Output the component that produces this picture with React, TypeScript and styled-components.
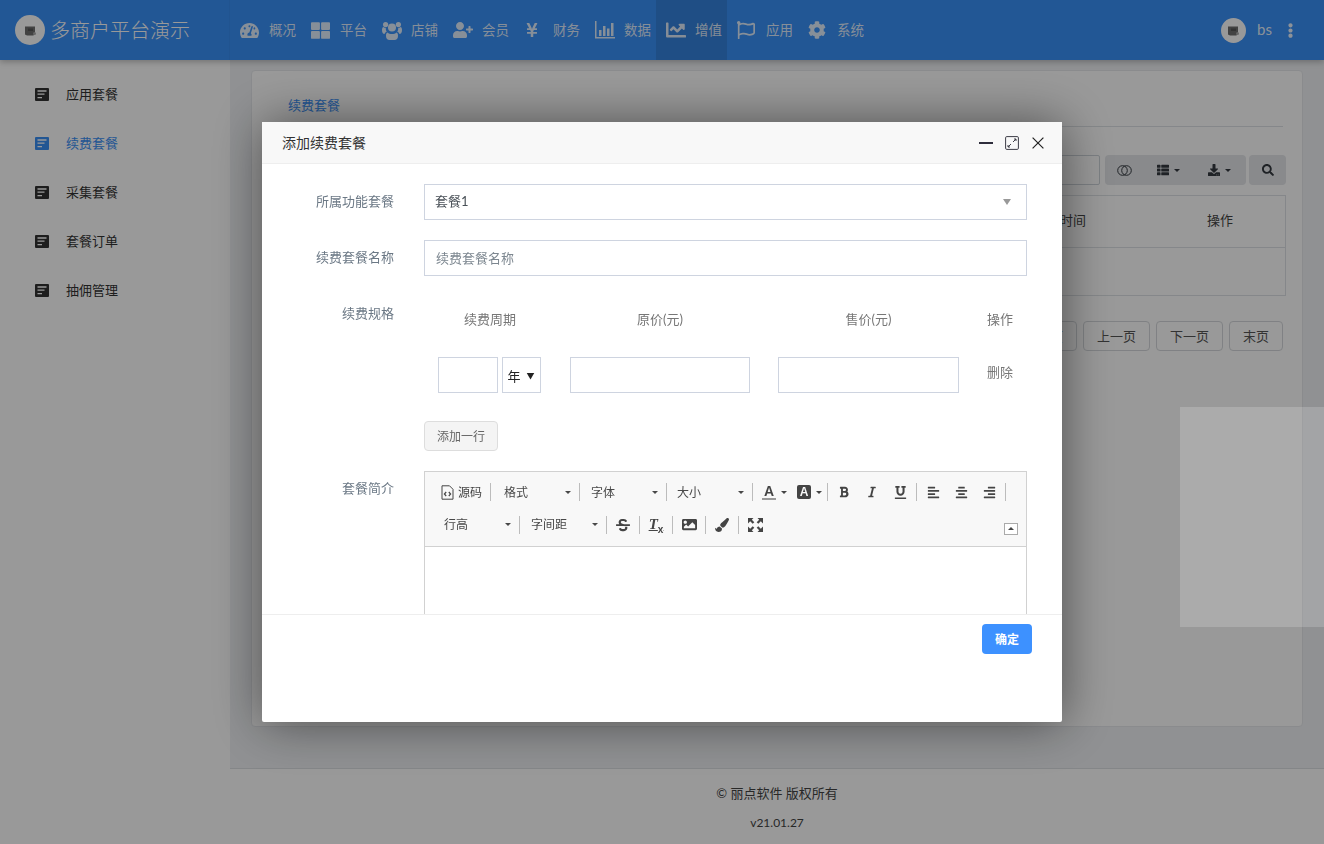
import { ReactNode } from 'react';
import styled, { createGlobalStyle } from 'styled-components';
import {
  FaAlignCenter,
  FaAlignLeft,
  FaAlignRight,
  FaBold,
  FaChartLine,
  FaCog,
  FaDownload,
  FaEllipsisV,
  FaImage,
  FaItalic,
  FaPaintBrush,
  FaRegFlag,
  FaSearch,
  FaStrikethrough,
  FaTachometerAlt,
  FaThLarge,
  FaThList,
  FaUnderline,
  FaUserPlus,
  FaYenSign,
} from 'react-icons/fa';

const FONT = `Lato, "Noto Sans CJK SC", sans-serif`;

const UsersIcon = () => (
  <svg width="20" height="19" viewBox="0 0 20 19" fill="currentColor">
    <circle cx="10" cy="6.5" r="4" />
    <circle cx="3.6" cy="3.6" r="2.6" />
    <circle cx="16.4" cy="3.6" r="2.6" />
    <path d="M5.5 11.5c1 1 2.8 1.6 4.5 1.6s3.500-.6 4.500-1.600c1.200.3 1.500 2 1.500 3.500 0 2.500-1.500 4-3.500 4H7.500c-2 0-3.500-1.500-3.500-4 0-1.500.3-3.200 1.500-3.500z" />
    <path d="M0 9c0-1.500.5-3 1.500-3 .7.600 1.500.9 2.300.9-.2 1.500.3 2.800 1 3.600-1 .4-1.800 1.200-2.200 2.500C1 13 0 11.500 0 9zM20 9c0-1.500-.5-3-1.500-3-.7.600-1.500.9-2.300.9.200 1.500-.3 2.800-1 3.600 1 .4 1.800 1.200 2.200 2.500 1.600 0 2.600-1.500 2.600-4z" />
  </svg>
);

const BarChartIcon = () => (
  <svg width="20" height="18" viewBox="0 0 20 18" fill="currentColor">
    <path d="M0 0h1.500v16H20v1.500H0z" />
    <path d="M4 9h2.500v6H4zM8 5h2.500v10H8zM12 7.500h2.500V15H12zM16 2h2.500v13H16z" />
  </svg>
);

const DocIcon = () => (
  <svg width="14" height="13" viewBox="0 0 14 13">
    <rect width="14" height="13" rx="1" fill="currentColor" />
    <path d="M2.500 3h9M2.500 6.200h7M2.500 9.600h4.500" stroke="#fff" strokeWidth="1.300" />
  </svg>
);

const SourceIcon = () => (
  <svg width="13" height="15" viewBox="0 0 13 15" fill="none" stroke="#444">
    <path d="M1 .8h7.500L12 4.300v9.900H1z" />
    <path d="M5.200 7 3.400 9l1.800 2M7.800 7l1.800 2-1.800 2" strokeWidth="1.200" />
  </svg>
);

const ExpandIcon = () => (
  <svg width="15" height="14" viewBox="0 0 15 14" fill="#444">
    <path d="M0 0h5.500L3.800 1.700l2.500 2.500-1.600 1.500-2.500-2.400L0 5.400zM15 0H9.500l1.700 1.700-2.500 2.500 1.600 1.500 2.500-2.400L15 5.400zM0 14h5.500l-1.700-1.700 2.500-2.500-1.600-1.500-2.500 2.400L0 8.600zM15 14H9.500l1.700-1.700-2.500-2.500 1.600-1.500 2.500 2.400L15 8.600z" />
  </svg>
);

const MaximizeIcon = () => (
  <svg width="14" height="14" viewBox="0 0 14 14" fill="none" stroke="#3c3c46">
    <rect x=".6" y=".6" width="12.800" height="12.800" rx="1.200" />
    <path d="m8 6 3-3M9 3h2v2M6 8l-3 3M3 9v2h2" />
  </svg>
);

const CloseIcon = () => (
  <svg width="12" height="12" viewBox="0 0 12 12" stroke="#222" strokeWidth="1.200">
    <path d="m.6.6 10.800 10.800M11.400.6.600 11.400" />
  </svg>
);

const OverlapIcon = () => (
  <svg width="15" height="11" viewBox="0 0 15 11" fill="none" stroke="currentColor">
    <circle cx="5.500" cy="5.500" r="4.800" />
    <circle cx="9.500" cy="5.500" r="4.800" />
  </svg>
);

const AvatarMark = () => (
  <svg width="13" height="13" viewBox="0 0 13 13">
    <path d="M1 2.500h10v6l-1.500 3H3l-2-1z" fill="#6f6f6f" />
    <path d="M4 4.500h5v2.500H4z" fill="#555" />
    <circle cx="10.500" cy="9.500" r="1.500" fill="#aaa" />
  </svg>
);

const NAV: { label: string; icon: ReactNode; active?: boolean }[] = [
  { label: '概况', icon: <FaTachometerAlt size={19} /> },
  { label: '平台', icon: <FaThLarge size={19} /> },
  { label: '店铺', icon: <UsersIcon /> },
  { label: '会员', icon: <FaUserPlus size={20} /> },
  { label: '财务', icon: <FaYenSign size={16} /> },
  { label: '数据', icon: <BarChartIcon /> },
  { label: '增值', icon: <FaChartLine size={20} />, active: true },
  { label: '应用', icon: <FaRegFlag size={18} /> },
  { label: '系统', icon: <FaCog size={18} /> },
];

const SIDE = [
  { label: '应用套餐' },
  { label: '续费套餐', active: true },
  { label: '采集套餐' },
  { label: '套餐订单' },
  { label: '抽佣管理' },
];

export default function App() {
  return (
    <>
      <GlobalStyle />
      <Page>
        <Header>
          <Brand>
            <Avatar $size={30}>
              <AvatarMark />
            </Avatar>
            <BrandName>多商户平台演示</BrandName>
          </Brand>
          <Nav>
            {NAV.map((item) => (
              <NavItem key={item.label} $active={item.active}>
                <NavIcon>{item.icon}</NavIcon>
                <NavText>{item.label}</NavText>
              </NavItem>
            ))}
          </Nav>
          <UserBox>
            <Avatar $size={25}>
              <AvatarMark />
            </Avatar>
            <UserName>bs</UserName>
            <FaEllipsisV size={15} />
          </UserBox>
        </Header>
        <Body>
          <Sidebar>
            {SIDE.map((item) => (
              <SideItem key={item.label} $active={item.active}>
                <DocIcon />
                <SideText>{item.label}</SideText>
              </SideItem>
            ))}
          </Sidebar>
          <Main>
            <Card>
              <TabBar>
                <Tab>续费套餐</Tab>
              </TabBar>
              <TableTools>
                <SearchBox placeholder="" />
                <ToolGroup>
                  <ToolButton $width={38}>
                    <OverlapIcon />
                  </ToolButton>
                  <ToolButton $width={50}>
                    <FaThList size={12} />
                    <Caret />
                  </ToolButton>
                  <ToolButton $width={53}>
                    <FaDownload size={12} />
                    <Caret />
                  </ToolButton>
                </ToolGroup>
                <ToolButton $width={37} $single>
                  <FaSearch size={12} />
                </ToolButton>
              </TableTools>
              <DataTable>
                <TableHead>
                  <span />
                  <HeadCell>创建时间</HeadCell>
                  <HeadCell>操作</HeadCell>
                </TableHead>
                <TableEmpty />
              </DataTable>
              <Pager>
                <PageButton>首页</PageButton>
                <PageButton>上一页</PageButton>
                <PageButton>下一页</PageButton>
                <PageButton>末页</PageButton>
              </Pager>
            </Card>
            <Footer>
              <FooterLine>© 丽点软件 版权所有</FooterLine>
              <FooterLine $small>v21.01.27</FooterLine>
            </Footer>
          </Main>
        </Body>
      </Page>

      <Shade>
        <GhostPanel />
        <Modal>
          <ModalHead>
            <ModalTitle>添加续费套餐</ModalTitle>
            <ModalActions>
              <MinimizeBar />
              <MaximizeIcon />
              <CloseIcon />
            </ModalActions>
          </ModalHead>
          <ModalBody>
            <FormRow>
              <FormLabel>所属功能套餐</FormLabel>
              <SelectBox>
                <SelectText>套餐1</SelectText>
                <SelectArrow />
              </SelectBox>
            </FormRow>
            <FormRow>
              <FormLabel>续费套餐名称</FormLabel>
              <TextInput placeholder="续费套餐名称" />
            </FormRow>
            <FormRow>
              <FormLabel>续费规格</FormLabel>
              <SpecBlock>
                <SpecGrid>
                  <SpecHead>续费周期</SpecHead>
                  <SpecHead>原价(元)</SpecHead>
                  <SpecHead>售价(元)</SpecHead>
                  <SpecHead>操作</SpecHead>
                  <PeriodCell>
                    <SmallInput $width={60} />
                    <UnitSelect>
                      年<UnitArrow>▼</UnitArrow>
                    </UnitSelect>
                  </PeriodCell>
                  <SpecCell>
                    <SmallInput $width={180} />
                  </SpecCell>
                  <SpecCell>
                    <SmallInput $width={181} />
                  </SpecCell>
                  <DeleteCell>删除</DeleteCell>
                </SpecGrid>
                <AddRowButton>添加一行</AddRowButton>
              </SpecBlock>
            </FormRow>
            <FormRow>
              <FormLabel>套餐简介</FormLabel>
              <Editor>
                <EditorToolbar>
                  <ToolRow $height={32}>
                    <SourceButton>
                      <SourceIcon />
                      <ComboText>源码</ComboText>
                    </SourceButton>
                    <Sep />
                    <Combo $width={88} $inset={13}>
                      <ComboText>格式</ComboText>
                      <Caret />
                    </Combo>
                    <Sep />
                    <Combo $width={86} $inset={11}>
                      <ComboText>字体</ComboText>
                      <Caret />
                    </Combo>
                    <Sep />
                    <Combo $width={85} $inset={10}>
                      <ComboText>大小</ComboText>
                      <Caret />
                    </Combo>
                    <Sep />
                    <ColorButton>
                      <ColorA>A</ColorA>
                      <Caret />
                    </ColorButton>
                    <ColorButton>
                      <ColorABack>A</ColorABack>
                      <Caret />
                    </ColorButton>
                    <Sep />
                    <EdGroup>
                      <EdButton>
                        <FaBold size={12} />
                      </EdButton>
                      <EdButton>
                        <FaItalic size={12} />
                      </EdButton>
                      <EdButton>
                        <FaUnderline size={13} />
                      </EdButton>
                    </EdGroup>
                    <Sep />
                    <EdGroup>
                      <EdButton>
                        <FaAlignLeft size={13} />
                      </EdButton>
                      <EdButton>
                        <FaAlignCenter size={13} />
                      </EdButton>
                      <EdButton>
                        <FaAlignRight size={13} />
                      </EdButton>
                    </EdGroup>
                    <Sep />
                  </ToolRow>
                  <ToolRow $height={33}>
                    <Combo $width={94} $inset={19}>
                      <ComboText>行高</ComboText>
                      <Caret />
                    </Combo>
                    <Sep />
                    <Combo $width={86} $inset={11}>
                      <ComboText>字间距</ComboText>
                      <Caret />
                    </Combo>
                    <Sep />
                    <EdGroup>
                      <EdButton>
                        <FaStrikethrough size={14} />
                      </EdButton>
                    </EdGroup>
                    <Sep />
                    <EdGroup>
                      <EdButton>
                        <ClearMark>
                          T<sub>x</sub>
                        </ClearMark>
                      </EdButton>
                    </EdGroup>
                    <Sep />
                    <EdGroup>
                      <EdButton>
                        <FaImage size={15} />
                      </EdButton>
                    </EdGroup>
                    <Sep />
                    <EdGroup>
                      <EdButton>
                        <FaPaintBrush size={14} />
                      </EdButton>
                    </EdGroup>
                    <Sep />
                    <EdGroup>
                      <EdButton>
                        <ExpandIcon />
                      </EdButton>
                    </EdGroup>
                    <CollapseBox />
                  </ToolRow>
                </EditorToolbar>
                <EditorArea />
              </Editor>
            </FormRow>
          </ModalBody>
          <ModalFoot>
            <ConfirmButton>确定</ConfirmButton>
          </ModalFoot>
        </Modal>
      </Shade>
    </>
  );
}

const GlobalStyle = createGlobalStyle`
  * {
    box-sizing: border-box;
  }

  html,
  body {
    margin: 0;
    height: 100%;
    overflow: hidden;
    font-family: ${FONT};
    font-size: 13px;
    color: #333;
    background: #fff;
  }

  input {
    font-family: ${FONT};
    font-size: 13px;
  }
`;

const Page = styled.div`
  height: 844px;
  display: flex;
  flex-direction: column;
`;

const Header = styled.header`
  height: 60px;
  flex: none;
  display: flex;
  align-items: stretch;
  background: #3a91f8;
  color: #fff;
  box-shadow: 0 2px 6px rgba(0, 0, 0, 0.25);
  position: relative;
`;

const Brand = styled.div`
  width: 230px;
  flex: none;
  display: flex;
  align-items: center;
  gap: 5px;
  padding-left: 15px;
  border-right: 1px solid rgba(0, 0, 0, 0.03);
`;

const Avatar = styled.div<{ $size: number }>`
  width: ${(p) => p.$size}px;
  height: ${(p) => p.$size}px;
  border-radius: 50%;
  background: #fff;
  display: flex;
  align-items: center;
  justify-content: center;
`;

const BrandName = styled.div`
  padding-bottom: 2px;
  font-size: 20px;
  font-weight: 300;
  color: #fff;
`;

const Nav = styled.nav`
  display: flex;
  align-items: stretch;
`;

const NavItem = styled.div<{ $active?: boolean }>`
  width: 71px;
  display: flex;
  align-items: center;
  padding-left: 10px;
  font-size: 13.500px;
  white-space: nowrap;
  color: rgba(255, 255, 255, 0.85);
  background: ${(p) => (p.$active ? 'rgba(0, 0, 0, 0.1)' : 'transparent')};
`;

const NavIcon = styled.span`
  width: 29px;
  flex: none;
  display: flex;
  align-items: center;
`;

const NavText = styled.span`
  padding-bottom: 2px;
`;

const UserBox = styled.div`
  margin-left: auto;
  display: flex;
  align-items: center;
  padding-right: 26px;
  color: rgba(255, 255, 255, 0.9);

  & > svg {
    margin-left: 11px;
  }
`;

const UserName = styled.span`
  margin-left: 11px;
  padding-bottom: 2px;
  font-size: 15px;
`;

const Body = styled.div`
  flex: 1;
  min-height: 0;
  display: flex;
`;

const Sidebar = styled.aside`
  width: 230px;
  flex: none;
  background: #fff;
  padding-top: 10px;
`;

const SideItem = styled.div<{ $active?: boolean }>`
  height: 49px;
  display: flex;
  align-items: center;
  gap: 17px;
  padding-left: 35px;
  color: ${(p) => (p.$active ? '#3a8ff5' : '#333')};
`;

const SideText = styled.span`
  padding-bottom: 2px;
`;

const Main = styled.main`
  flex: 1;
  min-width: 0;
  display: flex;
  flex-direction: column;
  background: #f0f2f5;
`;

const Card = styled.section`
  height: 657px;
  margin: 10px 21px 41px;
  padding: 0 16px 0 19px;
  background: #fff;
  border: 1px solid #e6e8ec;
  border-radius: 4px;
`;

const TabBar = styled.div`
  height: 56px;
  margin-right: 3px;
  border-bottom: 1px solid #dee2e6;
  display: flex;
  align-items: flex-end;
  padding: 0 0 12px 17px;
`;

const Tab = styled.span`
  color: #3a8ff5;
`;

const TableTools = styled.div`
  margin-top: 28px;
  display: flex;
  justify-content: flex-end;
  gap: 3px;
`;

const SearchBox = styled.input`
  width: 300px;
  height: 30px;
  margin-right: 2px;
  border: 1px solid #ced4da;
  border-radius: 0 2px 2px 0;
`;

const ToolGroup = styled.div`
  display: flex;
  border-radius: 4px;
  overflow: hidden;
`;

const ToolButton = styled.div<{ $width: number; $single?: boolean }>`
  width: ${(p) => p.$width}px;
  height: 30px;
  display: flex;
  align-items: center;
  justify-content: center;
  gap: 5px;
  background: #e4e6e9;
  color: #343a40;
  border-radius: ${(p) => (p.$single ? '4px' : '0')};
`;

const Caret = styled.i`
  width: 0;
  height: 0;
  flex: none;
  border-left: 3px solid transparent;
  border-right: 3px solid transparent;
  border-top: 3px solid currentColor;
`;

const DataTable = styled.div`
  margin-top: 10px;
  border: 1px solid #dee2e6;
`;

const TableHead = styled.div`
  height: 52px;
  padding-bottom: 4px;
  display: grid;
  grid-template-columns: 1fr 190px 130px;
  align-items: center;
  border-bottom: 1px solid #dee2e6;
`;

const HeadCell = styled.span`
  text-align: center;
  color: #444;
`;

const TableEmpty = styled.div`
  height: 47px;
`;

const Pager = styled.div`
  margin-top: 25px;
  padding-right: 3px;
  display: flex;
  justify-content: flex-end;
  gap: 6px;
`;

const PageButton = styled.div`
  height: 30px;
  padding: 0 13px 2px;
  display: flex;
  align-items: center;
  border: 1px solid #d5d8dc;
  border-radius: 4px;
  color: #555;
`;

const Footer = styled.footer`
  flex: 1;
  padding-top: 10px;
  background: #fff;
  border-top: 1px solid #dcdfe3;
`;

const FooterLine = styled.div<{ $small?: boolean }>`
  height: 30px;
  line-height: 28px;
  text-align: center;
  font-size: ${(p) => (p.$small ? '12px' : '13px')};
  color: #444;
`;

const Shade = styled.div`
  position: fixed;
  inset: 0;
  display: flex;
  align-items: center;
  justify-content: center;
  background: rgba(0, 0, 0, 0.4);
`;

const GhostPanel = styled.div`
  position: absolute;
  left: 1180px;
  top: 407px;
  right: 0;
  height: 220px;
  background: rgba(255, 255, 255, 0.17);
`;

const Modal = styled.div`
  position: relative;
  width: 800px;
  height: 600px;
  display: flex;
  flex-direction: column;
  background: #fff;
  border-radius: 2px;
  box-shadow: 1px 1px 50px rgba(0, 0, 0, 0.5);
`;

const ModalHead = styled.div`
  height: 42px;
  flex: none;
  display: flex;
  align-items: center;
  justify-content: space-between;
  padding: 0 18px 0 20px;
  background: #f8f8f8;
  border-bottom: 1px solid #eee;
`;

const ModalTitle = styled.div`
  padding-bottom: 2px;
  font-size: 14px;
  color: #333;
`;

const ModalActions = styled.div`
  display: flex;
  align-items: center;
  gap: 12px;

  & > svg:last-child {
    margin-left: 1px;
  }
`;

const MinimizeBar = styled.i`
  width: 14px;
  height: 2px;
  background: #2e2d3c;
`;

const ModalBody = styled.div`
  height: 451px;
  flex: none;
  overflow: hidden;
  padding: 20px 35px 0 0;
  border-bottom: 1px solid #eee;
`;

const FormRow = styled.div`
  display: flex;
  margin-bottom: 20px;
`;

const FormLabel = styled.label`
  width: 132px;
  flex: none;
  margin-right: 30px;
  line-height: 35px;
  text-align: right;
  color: #6b7885;
`;

const SelectBox = styled.div`
  flex: 1;
  height: 36px;
  padding: 0 10px;
  display: flex;
  align-items: center;
  justify-content: space-between;
  border: 1px solid #ced4e0;
  color: #495057;
`;

const SelectText = styled.span`
  padding-bottom: 3px;
`;

const SelectArrow = styled.i`
  width: 0;
  height: 0;
  margin-right: 5px;
  border-left: 4px solid transparent;
  border-right: 4px solid transparent;
  border-top: 6px solid #999;
`;

const TextInput = styled.input`
  flex: 1;
  height: 36px;
  padding: 0 11px;
  border: 1px solid #ced4e0;
  outline: none;

  &::placeholder {
    color: #7d8790;
  }
`;

const SpecBlock = styled.div`
  flex: 1;
  min-width: 0;
`;

const SpecGrid = styled.div`
  display: grid;
  grid-template-columns: 132px 208px 209px 54px;
  color: #777;
`;

const SpecHead = styled.div`
  height: 46px;
  line-height: 46px;
  text-align: center;
`;

const SpecCell = styled.div`
  height: 66px;
  display: flex;
  align-items: center;
  justify-content: center;
  gap: 4px;
`;

const PeriodCell = styled(SpecCell)`
  padding-right: 2px;
`;

const SmallInput = styled.input<{ $width: number }>`
  width: ${(p) => p.$width}px;
  height: 36px;
  border: 1px solid #ced4e0;
  outline: none;
`;

const UnitSelect = styled.div`
  width: 39px;
  height: 36px;
  padding-left: 5px;
  display: flex;
  align-items: center;
  gap: 6px;
  border: 1px solid #ced4e0;
  color: #222;
`;

const UnitArrow = styled.span`
  font-size: 8px;
`;

const DeleteCell = styled.div`
  height: 66px;
  padding-top: 21px;
  text-align: center;
  line-height: 18px;
`;

const AddRowButton = styled.button`
  display: block;
  width: 74px;
  height: 30px;
  margin-top: 13px;
  padding: 0 0 2px;
  font-family: ${FONT};
  font-size: 12px;
  color: #666;
  background: #f4f4f4;
  border: 1px solid #ddd;
  border-radius: 4px;
`;

const Editor = styled.div`
  flex: 1;
  min-width: 0;
  border: 1px solid #d1d1d1;
`;

const EditorToolbar = styled.div`
  padding: 4px 0 5px;
  background: #f8f8f8;
  border-bottom: 1px solid #d1d1d1;
`;

const ToolRow = styled.div<{ $height: number }>`
  height: ${(p) => p.$height}px;
  display: flex;
  align-items: center;
  color: #444;
`;

const SourceButton = styled.div`
  width: 65px;
  flex: none;
  padding-left: 16px;
  display: flex;
  align-items: center;
  gap: 4px;
  font-size: 12px;
`;

const ComboText = styled.span`
  padding-bottom: 2px;
`;

const Sep = styled.i`
  width: 1px;
  height: 18px;
  flex: none;
  background: #bcbcbc;
`;

const Combo = styled.div<{ $width: number; $inset?: number }>`
  width: ${(p) => p.$width}px;
  flex: none;
  padding: 0 8px 0 ${(p) => p.$inset ?? 12}px;
  display: flex;
  align-items: center;
  justify-content: space-between;
  font-size: 12px;
  color: #484848;
`;

const ColorButton = styled.div`
  flex: none;
  width: 37px;
  padding-left: 9px;
  display: flex;
  align-items: center;
  gap: 5px;
`;

const ColorA = styled.span`
  font-family: 'Liberation Sans', sans-serif;
  font-size: 14px;
  font-weight: 700;
  line-height: 14px;
  border-bottom: 2px solid #999;
  padding: 0 2px;
`;

const ColorABack = styled.span`
  font-family: 'Liberation Sans', sans-serif;
  font-size: 12px;
  font-weight: 700;
  line-height: 14px;
  width: 14px;
  text-align: center;
  color: #f8f8f8;
  background: #444;
  border-radius: 2px;
  margin-left: -2px;
`;

const EdGroup = styled.div`
  display: flex;
  padding: 0 2px;
`;

const EdButton = styled.div`
  width: 28px;
  height: 28px;
  display: flex;
  align-items: center;
  justify-content: center;
`;

const ClearMark = styled.span`
  font-family: 'Liberation Serif', serif;
  font-size: 15px;
  font-weight: 700;
  font-style: italic;
  text-decoration: underline;

  sub {
    font-family: 'Liberation Sans', sans-serif;
    font-size: 10px;
    font-style: normal;
    line-height: 0;
  }
`;

const CollapseBox = styled.div`
  width: 14px;
  height: 12px;
  margin-left: auto;
  margin-right: 8px;
  margin-top: 8px;
  display: flex;
  align-items: center;
  justify-content: center;
  background: #fff;
  border: 1px solid #aaa;

  &::after {
    content: '';
    border-left: 3px solid transparent;
    border-right: 3px solid transparent;
    border-bottom: 3px solid #444;
  }
`;

const EditorArea = styled.div`
  height: 300px;
  background: #fff;
`;

const ModalFoot = styled.div`
  flex: 1;
  display: flex;
  justify-content: flex-end;
  align-items: flex-start;
  padding: 9px 30px 0 0;
`;

const ConfirmButton = styled.button`
  width: 50px;
  height: 30px;
  padding: 0 0 2px;
  font-family: ${FONT};
  font-size: 12px;
  font-weight: 600;
  color: #fff;
  background: #3d91ff;
  border: 0;
  border-radius: 4px;
`;
